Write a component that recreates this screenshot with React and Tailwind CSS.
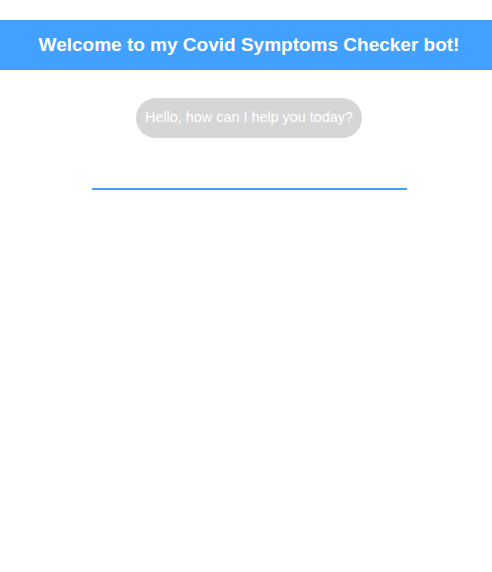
const App = () => {
  return (
    <div className="min-h-[572px] bg-white pt-5 font-['Liberation_Sans',sans-serif]">
      <header className="flex h-[50px] items-center justify-center bg-[#42a0ff] pl-[6px]">
        <h1 className="text-[19px] font-bold text-white">
          Welcome to my Covid Symptoms Checker bot!
        </h1>
      </header>
      <div className="flex flex-col items-center pl-[6px] pt-7">
        <div className="flex h-10 items-center rounded-full bg-[#d6d6d6] px-[9px] text-[14.4px] text-white">
          Hello, how can I help you today?
        </div>
        <input
          type="text"
          className="mt-[50px] h-[2px] w-[315px] border-b-2 border-[#4a9de8] bg-transparent outline-none"
        />
      </div>
    </div>
  )
}

export default App
